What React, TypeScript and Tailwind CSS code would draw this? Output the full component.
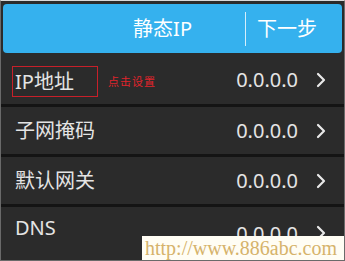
import React from 'react';

const rows = [
  { label: 'IP地址', value: '0.0.0.0', hint: true },
  { label: '子网掩码', value: '0.0.0.0' },
  { label: '默认网关', value: '0.0.0.0' },
  { label: 'DNS', value: '0.0.0.0' },
];

const Chevron = () => (
  <svg width="12" height="18" viewBox="0 0 12 18" fill="none">
    <path d="M3 3 L9 9 L3 15" stroke="#e8e8e8" strokeWidth="2.2" strokeLinecap="round" strokeLinejoin="round" />
  </svg>
);

export default function App() {
  return (
    <div
      className="relative w-[345px] h-[261px] overflow-hidden bg-[#2b2b2b] border border-[#6a6a6a] border-t-[#d8d8d8]"
      style={{ fontFamily: '"Noto Sans", "Noto Sans CJK SC", sans-serif' }}
    >
      {/* Header */}
      <div className="mx-[2px] mt-[3px] h-[49px] rounded-[4px] bg-[#35b1ee] flex items-center text-white">
        <div className="flex-1 flex justify-end pr-[53px] text-[20px] leading-none pt-[1px]">静态IP</div>
        <div className="w-px h-[34px] bg-[#d6eefb]" />
        <div className="w-[96px] pl-[11px] text-[20px] leading-none pt-[1px]">下一步</div>
      </div>

      {/* Rows */}
      <div className="flex flex-col">
        {rows.map((row, i) => (
          <div
            key={row.label}
            className={`flex items-center text-[#e4e4e4] ${i === 0 ? 'h-[51px]' : i === 3 ? 'h-[51px] border-t-[3px] border-[#141414]' : 'h-[50px] border-t-[3px] border-[#141414]'}`}
          >
            <div className="flex items-center pl-[11px]">
              {row.hint ? (
                <>
                  <div className="border border-[#c8202a] px-[2px] h-[31px] w-[86px] flex items-center text-[20px] leading-none mt-[6px]">
                    {row.label}
                  </div>
                  <span className="ml-[10px] text-[11px] tracking-[1px] text-[#e0242c] mt-[7px]">点击设置</span>
                </>
              ) : (
                <span className={`text-[20px] leading-none pl-[3px] ${row.label === 'DNS' ? 'mt-[-6px]' : ''}`}>{row.label}</span>
              )}
            </div>
            <div className="flex-1" />
            <span className={`text-[20px] leading-none ${row.label === 'DNS' ? 'mt-[6px]' : i === 0 ? 'mt-[3px]' : ''}`}>{row.value}</span>
            <div className={`w-[46px] flex justify-center ${row.label === 'DNS' ? 'mt-[4px]' : i === 0 ? 'mt-[2px]' : ''}`}>
              <Chevron />
            </div>
          </div>
        ))}
      </div>

      {/* Watermark */}
      <div
        className="absolute right-0 bottom-0 w-[202px] h-[24px] bg-[#fffdf4] text-[#d6b36b] text-[20px] leading-none flex items-center pl-[3px]"
        style={{ fontFamily: '"Liberation Serif", serif' }}
      >
        http://www.886abc.com
      </div>
    </div>
  );
}
